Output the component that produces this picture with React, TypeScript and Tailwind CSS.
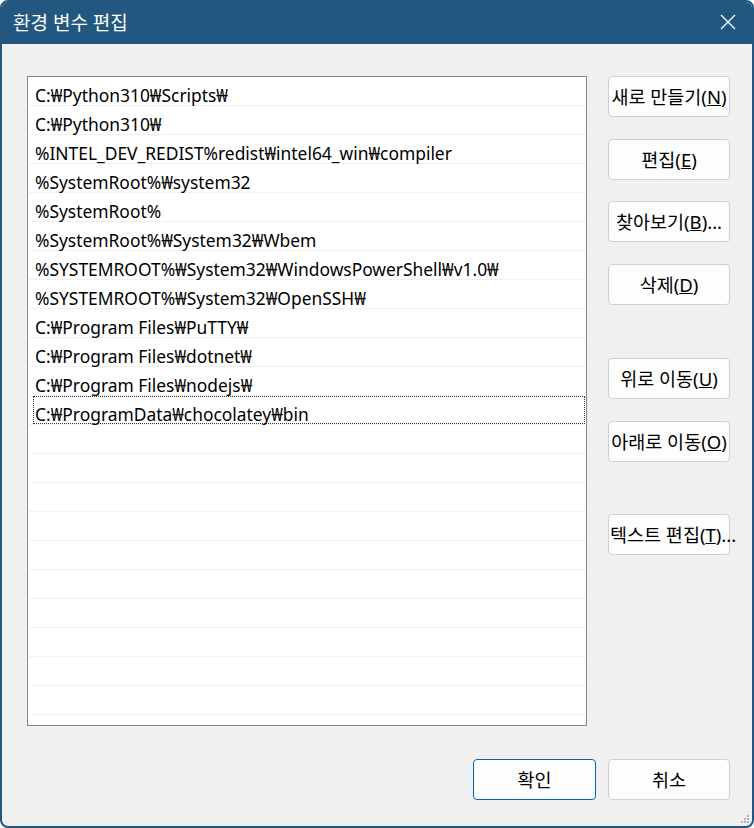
import React from "react";

const items = [
  "C:₩Python310₩Scripts₩",
  "C:₩Python310₩",
  "%INTEL_DEV_REDIST%redist₩intel64_win₩compiler",
  "%SystemRoot%₩system32",
  "%SystemRoot%",
  "%SystemRoot%₩System32₩Wbem",
  "%SYSTEMROOT%₩System32₩WindowsPowerShell₩v1.0₩",
  "%SYSTEMROOT%₩System32₩OpenSSH₩",
  "C:₩Program Files₩PuTTY₩",
  "C:₩Program Files₩dotnet₩",
  "C:₩Program Files₩nodejs₩",
  "C:₩ProgramData₩chocolatey₩bin",
];

const font = { fontFamily: '"Noto Sans", "Noto Sans CJK KR", sans-serif' };

function Btn({ label, u, suffix = "", cls = "" }: { label: string; u: string; suffix?: string; cls?: string }) {
  return (
    <div
      className={
        "h-[41px] w-[122px] rounded-[4px] border border-[#d0d0d0] bg-[#fdfdfd] flex items-center whitespace-nowrap text-[18.5px] text-black " +
        (cls.includes("justify-start") ? "" : "justify-center ") +
        cls
      }
    >
      <span>
        {label}(<span className="underline">{u}</span>){suffix}
      </span>
    </div>
  );
}

export default function App() {
  const rows = Array.from({ length: 22 }, (_, i) => items[i] ?? "");
  return (
    <div className="w-[754px] h-[828px] bg-white" style={font}>
      <div className="w-[754px] h-[828px] rounded-[8px] border-2 border-[#22587f] bg-[#f0f0f0] flex flex-col overflow-hidden">
        <div className="h-[42px] bg-[#22587f] flex items-center justify-between pl-[11px] pr-[16px] shrink-0">
          <span className="text-white text-[19px] mt-[1px]">환경 변수 편집</span>
          <svg width="16" height="16" viewBox="0 0 16 16" className="mt-[-2px]">
            <path d="M1 1 L15 15 M15 1 L1 15" stroke="white" strokeWidth="1.3" />
          </svg>
        </div>
        <div className="flex pl-[25px] pt-[32px]">
          <div className="w-[560px] h-[650px] border border-[#828790] bg-white pl-[1px] pr-[1px] overflow-hidden">
            {rows.map((t, i) => (
              <div key={i} className="h-[29px] border-b border-[#f0f0f0] relative">
                {i === 11 && (
                  <div className="absolute left-[4px] right-[0px] top-[0px] bottom-[0px] border border-dotted border-[#333]" />
                )}
                <div className="pl-[6px] pt-[7px] text-[17.4px] leading-[22px] text-black whitespace-nowrap">{t}</div>
              </div>
            ))}
          </div>
          <div className="ml-[21px] flex flex-col">
            <Btn label="새로 만들기" u="N" />
            <Btn label="편집" u="E" cls="mt-[22px]" />
            <Btn label="찾아보기" u="B" suffix="..." cls="mt-[21px]" />
            <Btn label="삭제" u="D" cls="mt-[22px]" />
            <Btn label="위로 이동" u="U" cls="mt-[53px]" />
            <Btn label="아래로 이동" u="O" cls="mt-[22px]" />
            <Btn label="텍스트 편집" u="T" suffix="..." cls="mt-[52px] justify-start pl-[1px]" />
          </div>
        </div>
        <div className="flex justify-end pr-[22px] mt-[33px] gap-[12px]">
          <div className="h-[41px] w-[123px] rounded-[4px] border border-[#0067c0] bg-[#fdfdfd] flex items-center justify-center text-[18.5px] text-black">
            확인
          </div>
          <div className="h-[41px] w-[122px] rounded-[4px] border border-[#d0d0d0] bg-[#fdfdfd] flex items-center justify-center text-[18.5px] text-black">
            취소
          </div>
        </div>
        <div className="flex justify-end pr-[2px] mt-[auto] pb-[2px]">
          <svg width="10" height="10" viewBox="0 0 10 10">
            <rect x="7" y="1" width="2" height="2" fill="#b0b0b0" />
            <rect x="4" y="4" width="2" height="2" fill="#b0b0b0" />
            <rect x="7" y="4" width="2" height="2" fill="#b0b0b0" />
            <rect x="1" y="7" width="2" height="2" fill="#b0b0b0" />
            <rect x="4" y="7" width="2" height="2" fill="#b0b0b0" />
            <rect x="7" y="7" width="2" height="2" fill="#b0b0b0" />
          </svg>
        </div>
      </div>
    </div>
  );
}
